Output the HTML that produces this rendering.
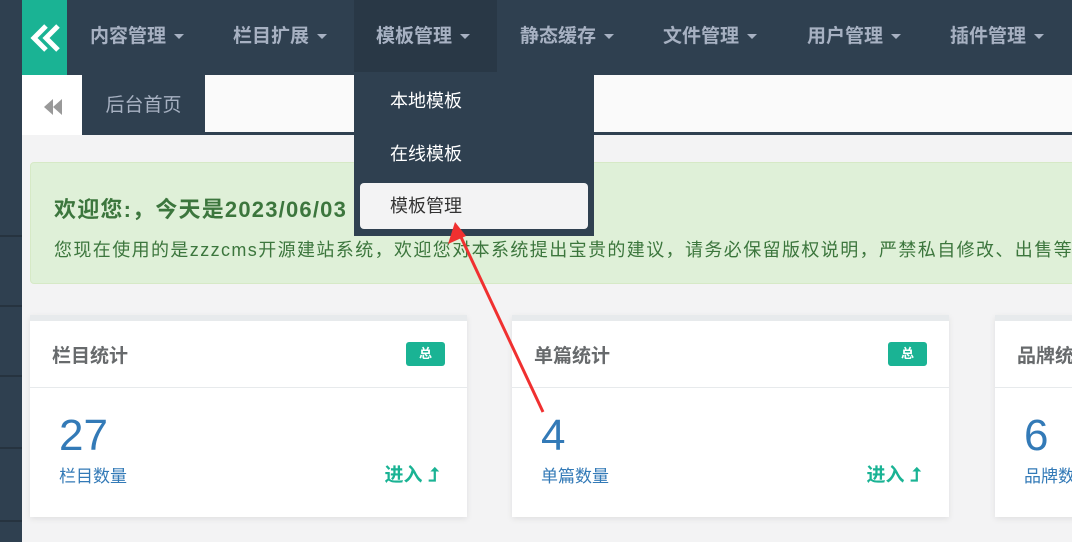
<!DOCTYPE html><html><head><meta charset="utf-8"><style>
*{margin:0;padding:0;box-sizing:border-box}
body{width:1072px;height:542px;overflow:hidden;background:#f3f3f4;font-family:"Liberation Sans","Noto Sans CJK SC",sans-serif;position:relative}
.side{position:absolute;left:0;top:0;width:22px;height:542px;background:#2f4050}
.side i{position:absolute;left:0;width:22px;height:2px;background:#26333f}
.top{position:absolute;left:22px;top:0;width:1050px;height:75px;background:#2f4050}
.logo{position:absolute;left:22px;top:0;width:45px;height:75px;background:#1ab394}
.nav{position:absolute;top:0;height:72px;line-height:74px;color:#a7b1c2;font-size:19px;font-weight:bold}
.nav.act{background:#293846;color:#a7b1c2}
.caret{display:inline-block;border-left:5px solid transparent;border-right:5px solid transparent;border-top:5px solid #a7b1c2;vertical-align:middle;margin-left:8px}
.tabs{position:absolute;left:22px;top:75px;width:1050px;height:60px;background:#fafafa;border-bottom:3px solid #2f4050}
.tbtn{position:absolute;left:0;top:0;width:60px;height:60px;background:#fff}
.tab{position:absolute;left:60px;top:0;width:123px;height:60px;background:#2f4050;color:#a7b1c2;font-size:19px;text-align:center;line-height:62px}
.alert{position:absolute;left:30px;top:162px;width:1060px;height:122px;background:#dff0d8;border:1px solid #d6e9c6;border-radius:4px;color:#3c763d}
.alert b{position:absolute;left:23px;top:29px;font-size:22px;letter-spacing:1.2px}
.alert p{position:absolute;left:23px;top:73px;font-size:18px;white-space:nowrap;letter-spacing:1.4px}
.card{position:absolute;top:315px;width:437px;height:202px;background:#fff;border-top:6px solid #e7eaec;box-shadow:0 2px 6px rgba(0,0,0,.08)}
.card h5{position:absolute;left:22px;top:20px;font-size:19px;color:#676a6c}
.badge{position:absolute;right:22px;top:21px;width:39px;height:24px;background:#1ab394;color:#fff;font-size:13px;text-align:center;line-height:24px;border-radius:3px;font-weight:bold}
.card .ln{position:absolute;left:0;top:66px;width:100%;height:1px;background:#e7eaec}
.num{position:absolute;left:29px;top:90px;font-size:44px;color:#337ab7}
.lab{position:absolute;left:29px;top:141px;font-size:17px;color:#337ab7}
.go{position:absolute;right:28px;top:139px;font-size:19px;color:#1ab394;font-weight:bold}
.dd{position:absolute;left:354px;top:72px;width:240px;height:164px;background:#2f4050}
.dd div{position:absolute;left:6px;width:228px;height:46px;line-height:46px;padding-left:30px;font-size:18px;color:#fff}
.dd .on{background:#f3f3f4;color:#333;border-radius:4px}
</style></head><body>
<div class="side"><i style="top:235px"></i><i style="top:305px"></i><i style="top:375px"></i><i style="top:447px"></i><i style="top:520px"></i></div>
<div class="top"></div>
<div class="logo"><svg width="45" height="75"><path d="M24 26 L12 38 L24 50 M36 26 L24 38 L36 50" fill="none" stroke="#fff" stroke-width="5"/></svg></div>
<div class="nav" style="left:90px">内容管理<span class="caret"></span></div>
<div class="nav" style="left:233px">栏目扩展<span class="caret"></span></div>
<div class="nav act" style="left:354px;width:143px;padding-left:22px">模板管理<span class="caret"></span></div>
<div class="nav" style="left:520px">静态缓存<span class="caret"></span></div>
<div class="nav" style="left:663px">文件管理<span class="caret"></span></div>
<div class="nav" style="left:807px">用户管理<span class="caret"></span></div>
<div class="nav" style="left:950px">插件管理<span class="caret"></span></div>
<div class="tabs"><div class="tbtn"><svg width="60" height="60"><path d="M31 24 L22 32 L31 40 Z M40 24 L31 32 L40 40 Z" fill="#999"/></svg></div><div class="tab">后台首页</div></div>
<div class="alert"><b>欢迎您:，今天是2023/06/03</b><p>您现在使用的是zzzcms开源建站系统，欢迎您对本系统提出宝贵的建议，请务必保留版权说明，严禁私自修改、出售等</p></div>
<div class="card" style="left:30px"><h5>栏目统计</h5><div class="badge">总</div><div class="ln"></div><div class="num">27</div><div class="lab">栏目数量</div><div class="go">进入 ⮥</div></div>
<div class="card" style="left:512px"><h5>单篇统计</h5><div class="badge">总</div><div class="ln"></div><div class="num">4</div><div class="lab">单篇数量</div><div class="go">进入 ⮥</div></div>
<div class="card" style="left:995px"><h5>品牌统计</h5><div class="ln"></div><div class="num">6</div><div class="lab">品牌数量</div></div>
<div class="dd"><div style="top:6px">本地模板</div><div style="top:59px">在线模板</div><div class="on" style="top:111px">模板管理</div></div>
<svg style="position:absolute;left:0;top:0" width="1072" height="542"><line x1="543" y1="412" x2="460" y2="235" stroke="#f03030" stroke-width="3"/><polygon points="455,222 448,244 466,236" fill="#f03030"/></svg>
</body></html>
